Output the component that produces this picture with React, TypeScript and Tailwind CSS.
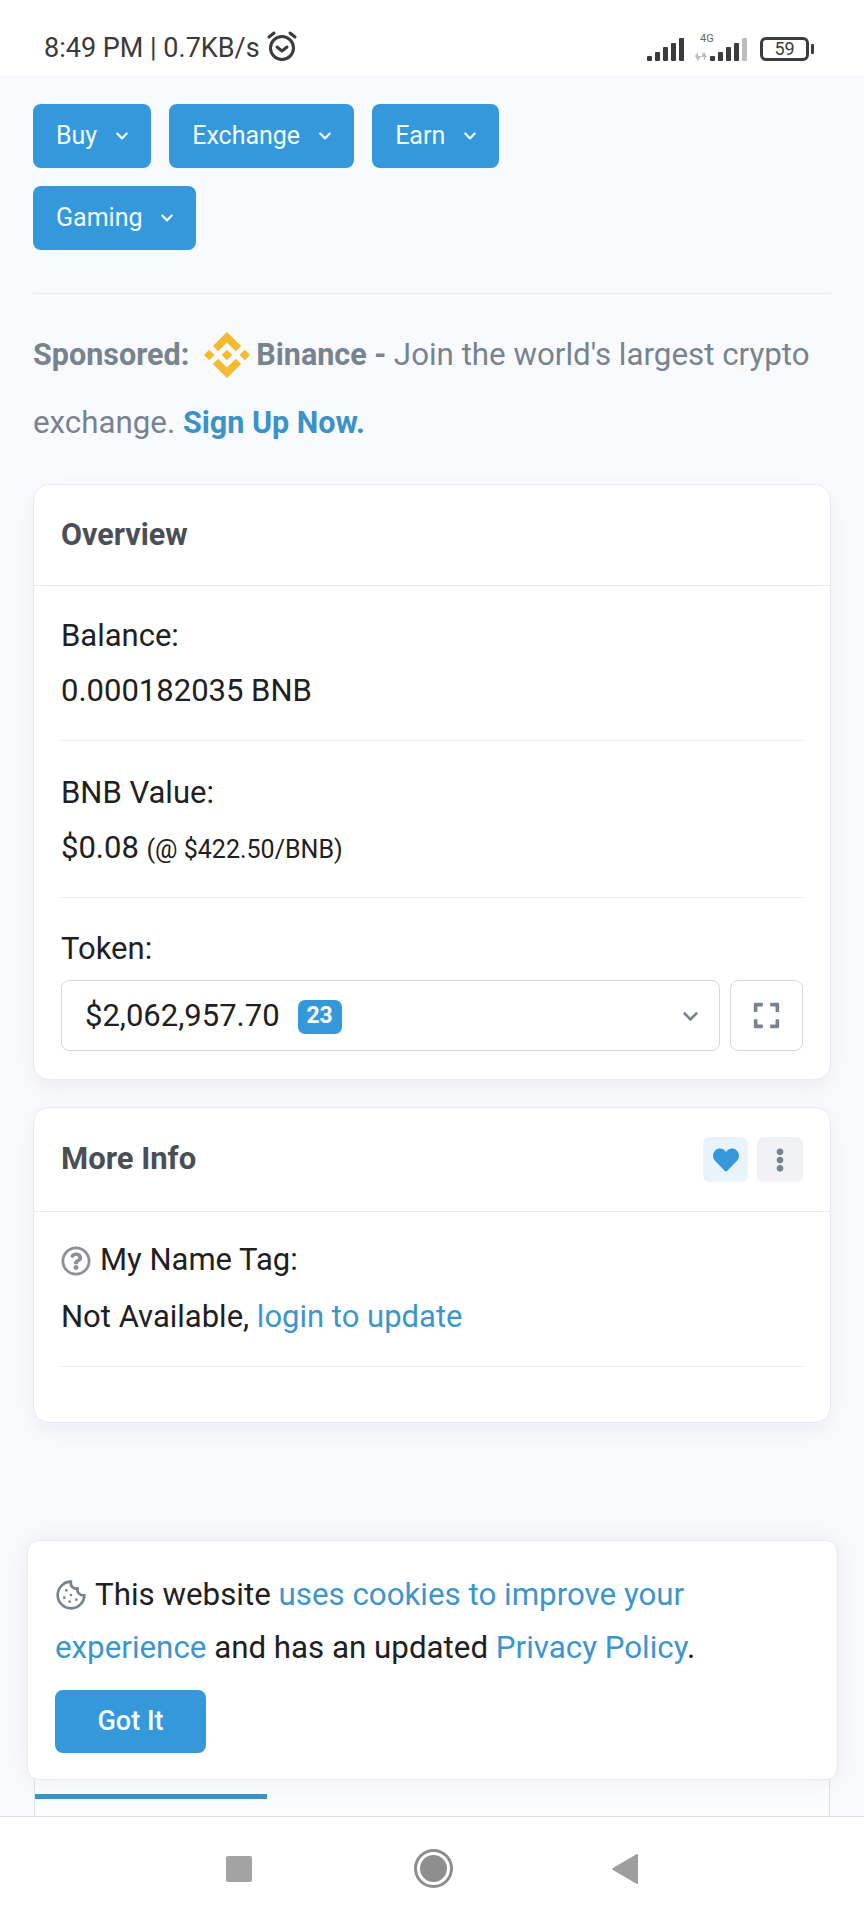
import React from 'react';
import { FaChevronDown, FaEllipsisV, FaExpand, FaHeart, FaRegQuestionCircle } from 'react-icons/fa';
import { SiBinance } from 'react-icons/si';
import { Cookie } from 'lucide-react';

const menus = ['Buy', 'Exchange', 'Earn', 'Gaming'];

const SignalBars: React.FC<{ lastFaded?: boolean }> = ({ lastFaded }) => (
    <svg width="38" height="23" viewBox="0 0 38 23" fill="#3c3c3c">
        <rect x="0" y="18" width="5" height="5" rx="1" />
        <rect x="8" y="14" width="5" height="9" rx="1" />
        <rect x="16" y="9" width="5" height="14" rx="1" />
        <rect x="24" y="5" width="5" height="18" rx="1" />
        <rect x="32" y="0" width="5" height="23" rx="1" fill={lastFaded ? '#bdbdbd' : '#3c3c3c'} />
    </svg>
);

const StatusBar = () => (
    <div className="h-[75px] bg-white flex items-start justify-between pl-[44px] pr-[50px] pt-[30px] shrink-0">
        <div className="flex items-center gap-[6px] text-[27px] leading-[36px] text-[#3a3a3a]">
            <span>8:49 PM | 0.7KB/s</span>
            <svg width="32" height="32" viewBox="0 0 32 32" fill="none" stroke="#3a3a3a" strokeWidth="3" className="-mt-[4px]">
                <circle cx="16" cy="18" r="11.5" />
                <path d="M11 17l5 4 5-4" strokeLinecap="round" strokeLinejoin="round" />
                <path d="M3 7l5-4M29 7l-5-4" strokeLinecap="round" />
            </svg>
        </div>
        <div className="flex items-center pt-[7px]">
            <SignalBars />
            <div className="relative w-[53px] h-[23px] ml-[10px] flex justify-end">
                <span className="absolute left-[5px] -top-[5px] text-[11px] leading-[12px] text-[#666]">4G</span>
                <svg width="13" height="9" viewBox="0 0 13 9" fill="#bdbdbd" className="absolute left-0 bottom-0">
                    <path d="M3 0v4h3L3 9 0 4h0zM9 9V5H6l3-5 3 5h-1z" />
                </svg>
                <SignalBars lastFaded />
            </div>
            <div className="ml-[12px] w-[49px] h-[24px] border-[3px] border-[#3c3c3c] rounded-[6px] text-[18px] leading-[18px] text-center text-[#3c3c3c]">59</div>
            <div className="ml-[2px] w-[3px] h-[10px] bg-[#3c3c3c] rounded-[1px]" />
        </div>
    </div>
);

const Row: React.FC<{ label: React.ReactNode; children: React.ReactNode }> = ({ label, children }) => (
    <div className="pt-[2px] pb-[21px] mb-[23px] border-b border-[#e9ecef]">
        <div className="h-[55px] flex items-center">{label}</div>
        <div className="h-[55px] flex items-center">{children}</div>
    </div>
);

const Card: React.FC<{ className?: string; children: React.ReactNode }> = ({ className, children }) => (
    <div className={`bg-white border border-[#e7eaf3] rounded-[16px] shadow-[0_8px_20px_rgba(189,197,209,0.2)] ${className ?? ''}`}>
        {children}
    </div>
);

export default function App() {
    return (
        <div className="relative w-[864px] h-[1920px] flex flex-col overflow-hidden bg-[#f9fafd] text-[31px] text-[#1e2022] font-['Roboto',sans-serif]">
            <StatusBar />

            <main className="flex-1 overflow-hidden px-[33px] pt-[29px]">
                <div className="pb-[43px] border-b border-[#eceef2]">
                    <div className="w-[480px] flex flex-wrap gap-[18px]">
                        {menus.map((m) => (
                            <button key={m} className="h-[64px] pl-[23px] pr-[22px] flex items-center gap-[18px] rounded-[8px] bg-[#3498db] text-[#f2fbff] text-[25px]">
                                {m}
                                <FaChevronDown className="w-[14px] h-[14px]" />
                            </button>
                        ))}
                    </div>
                </div>

                <p className="pt-[27px] mb-[27px] leading-[68px] text-[#77838f] text-[31.3px]">
                    <b className="font-bold text-[30.5px]">Sponsored:</b>
                    <SiBinance className="inline-block w-[46px] h-[46px] ml-[15px] mr-[6px] text-[#f3ba2f] align-middle -mt-[4px]" />
                    <b className="font-bold text-[30.5px]">Binance - </b>
                    Join the world's largest crypto exchange. <b className="font-bold text-[30.5px] text-[#3a92c8]">Sign Up Now.</b>
                </p>

                <Card className="mb-[27px]">
                    <div className="h-[101px] px-[27px] flex items-center border-b border-[#e7eaf3] text-[30.5px] font-bold text-[#4a4f55]">Overview</div>
                    <div className="pl-[27px] pr-[27px] pt-[21px] pb-[28px]">
                        <Row label="Balance:">
                            <span>0.000182035 BNB</span>
                        </Row>
                        <Row label="BNB Value:">
                            <span>$0.08 <span className="text-[25px]">(@ $422.50/BNB)</span></span>
                        </Row>
                        <div className="h-[55px] pt-[1px] flex items-center">Token:</div>
                        <div className="mt-[4px] flex gap-[10px]">
                            <div className="h-[71px] flex-1 flex items-center pl-[23px] pr-[20px] pt-[2px] border border-[#d5dae2] rounded-[8px]">
                                <span>$2,062,957.70</span>
                                <span className="ml-[18px] h-[34px] w-[44px] rounded-[7px] bg-[#3498db] text-white text-[23px] font-bold flex items-center justify-center">23</span>
                                <FaChevronDown className="ml-auto w-[17px] h-[17px] text-[#77838f]" />
                            </div>
                            <div className="h-[71px] w-[73px] flex items-center justify-center border border-[#d5dae2] rounded-[8px]">
                                <FaExpand className="w-[29px] h-[29px] text-[#77838f]" />
                            </div>
                        </div>
                    </div>
                </Card>

                <Card>
                    <div className="h-[104px] pl-[27px] pr-[27px] flex items-center justify-between border-b border-[#e7eaf3]">
                        <span className="font-bold text-[#4a4f55]">More Info</span>
                        <div className="flex gap-[9px]">
                            <div className="w-[45px] h-[45px] rounded-[7px] bg-[#e8f3fa] flex items-center justify-center">
                                <FaHeart className="w-[26px] h-[26px] text-[#3498db]" />
                            </div>
                            <div className="w-[46px] h-[45px] rounded-[7px] bg-[#f0f2f5] flex items-center justify-center">
                                <FaEllipsisV className="w-[24px] h-[24px] text-[#77838f]" />
                            </div>
                        </div>
                    </div>
                    <div className="px-[27px] pt-[21px] pb-[55px]">
                        <div className="pb-[21px] border-b border-[#e9ecef]">
                            <div className="h-[55px] flex items-center gap-[9px]">
                                <FaRegQuestionCircle className="w-[30px] h-[30px] text-[#8c9199]" />
                                My Name Tag:
                            </div>
                            <div className="h-[57px] pt-[2px] flex items-center">
                                <span>Not Available, <span className="text-[#3d96cb]">login to update</span></span>
                            </div>
                        </div>
                    </div>
                </Card>

                {/* mostly hidden behind the cookie notice */}
                <div className="mt-[177px] h-[400px] mx-[1px] pt-[193px] bg-[#fbfcfd] border border-[#e0e3e8] rounded-[16px]">
                    <div className="h-[5px] w-[232px] bg-[#3a94c9]" />
                </div>
            </main>

            <nav className="h-[104px] bg-white border-t border-[#d9dce1] flex items-center justify-center gap-[160px] shrink-0">
                <div className="w-[26px] h-[26px] mr-[2px] rounded-[2px] bg-[#a3a3a3]" />
                <div className="w-[39px] h-[39px] rounded-full border-[3px] border-[#8e8e8e] flex items-center justify-center">
                    <div className="w-[27px] h-[27px] rounded-full bg-[#8e8e8e]" />
                </div>
                <svg width="26" height="30" viewBox="0 0 26 30" fill="#9e9e9e" className="-ml-[1px]">
                    <path d="M26 1v28a1 1 0 0 1-1.6.8L1 16a1.2 1.2 0 0 1 0-2L24.4.2A1 1 0 0 1 26 1z" />
                </svg>
            </nav>

            <div className="absolute left-[27px] top-[1540px] w-[811px] h-[240px] bg-white border border-[#e7eaf3] rounded-[12px] shadow-[0_0_24px_rgba(140,152,164,0.15)] pl-[27px] pr-[27px] pt-[27px]">
                <p className="leading-[53px] text-[#1e2022] text-[31.3px]">
                    <Cookie className="inline-block w-[32px] h-[32px] mr-[8px] -mt-[4px] text-[#77838f]" />
                    This website <span className="text-[#3d96cb]">uses cookies to improve your experience</span> and has an updated <span className="text-[#3d96cb]">Privacy Policy</span>.
                </p>
                <button className="mt-[16px] w-[151px] h-[63px] rounded-[8px] bg-[#3498db] text-[#f2fbff] text-[27px] font-medium">Got It</button>
            </div>
        </div>
    );
}
